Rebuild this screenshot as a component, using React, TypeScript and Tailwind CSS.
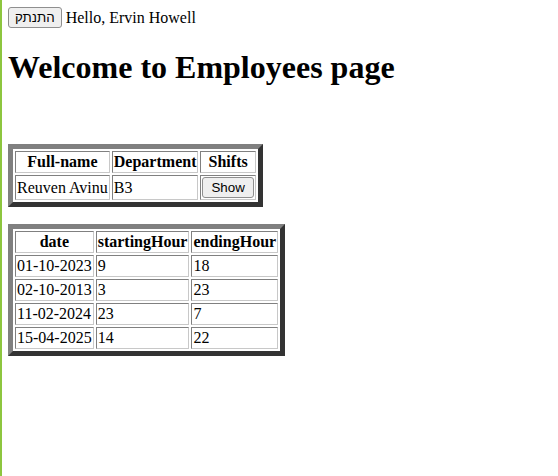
import React from "react";

const serif = { fontFamily: '"Liberation Serif", "Times New Roman", serif' };

function Btn({ children, wide }: { children: React.ReactNode; wide?: boolean }) {
  return (
    <button
      className={`rounded-[3px] border border-[#8f8f8f] bg-[#efefef] py-[2px] text-[13.333px] leading-[15px] text-black ${
        wide ? "px-[8px]" : "px-[6px]"
      }`}
      style={{ fontFamily: '"Liberation Sans", Arial, sans-serif' }}
    >
      {children}
    </button>
  );
}

const tableCls =
  "border-separate border-spacing-[2px] border-[5px] border-solid border-t-[#808080] border-l-[#808080] border-r-[#333333] border-b-[#333333]";
const cellCls =
  "border border-solid border-t-[#808080] border-l-[#808080] border-r-[#c8c8c8] border-b-[#c8c8c8] p-px";

export default function App() {
  const shifts = [
    ["01-10-2023", "9", "18"],
    ["02-10-2013", "3", "23"],
    ["11-02-2024", "23", "7"],
    ["15-04-2025", "14", "22"],
  ];
  return (
    <div
      className="min-h-[476px] border-l-2 border-[#8dc63f] bg-white pl-[6px] pt-[7px] text-[16px] leading-[18px] text-black"
      style={serif}
    >
      <div className="flex items-center gap-[4px]">
        <Btn>התנתק</Btn>
        <span>Hello, Ervin Howell</span>
      </div>
      <h1 className="mb-[21px] mt-[21px] text-[32px] font-bold leading-[37px]">
        Welcome to Employees page
      </h1>
      <table className={`${tableCls} mt-[58px]`}>
        <thead>
          <tr>
            <th className={cellCls}>Full-name</th>
            <th className={cellCls}>Department</th>
            <th className={cellCls}>Shifts</th>
          </tr>
        </thead>
        <tbody>
          <tr>
            <td className={cellCls}>Reuven Avinu</td>
            <td className={cellCls}>B3</td>
            <td className={`${cellCls} text-center`}>
              <Btn wide>Show</Btn>
            </td>
          </tr>
        </tbody>
      </table>
      <table className={`${tableCls} mt-[17px]`}>
        <thead>
          <tr>
            <th className={cellCls}>date</th>
            <th className={cellCls}>startingHour</th>
            <th className={cellCls}>endingHour</th>
          </tr>
        </thead>
        <tbody>
          {shifts.map((r) => (
            <tr key={r[0]}>
              {r.map((c, i) => (
                <td key={i} className={cellCls}>
                  {c}
                </td>
              ))}
            </tr>
          ))}
        </tbody>
      </table>
    </div>
  );
}
